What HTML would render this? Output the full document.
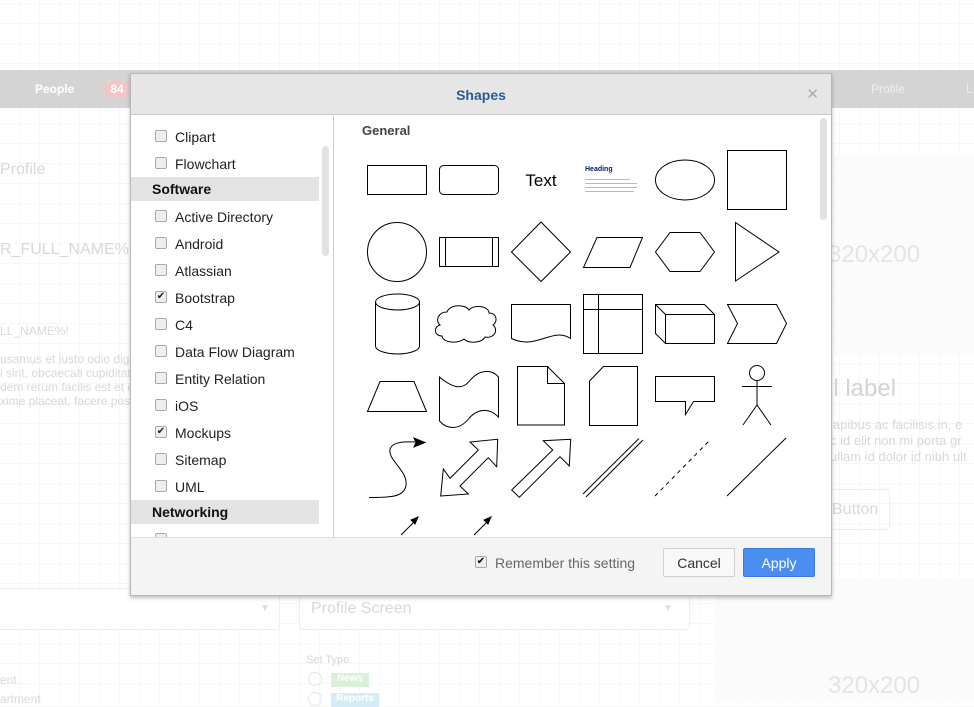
<!DOCTYPE html>
<html><head><meta charset="utf-8"><style>
*{margin:0;padding:0;box-sizing:border-box}
body{width:974px;height:703px;overflow:hidden;position:relative;font-family:"Liberation Sans",sans-serif;background:#fff;
background-image:repeating-linear-gradient(0deg,transparent 0 19px,#f7f7f7 19px 20px),repeating-linear-gradient(90deg,transparent 0 19px,#f7f7f7 19px 20px)}
.a{position:absolute;white-space:nowrap}
.f{color:#d8d8d8}
.dlg{position:absolute;left:130px;top:73px;width:702px;height:523px;background:#fff;border:1px solid #b8b8b8;box-shadow:0 2px 4px rgba(0,0,0,.25)}
.hd{position:absolute;left:0;top:0;width:700px;height:41px;background:#e6e6e6;border-bottom:1px solid #c8c8c8;text-align:center;font-weight:bold;font-size:14px;color:#2b5b94;line-height:42px}
.cl{position:absolute;right:12px;top:0;color:#aab;font-weight:normal;font-size:15px}
.lp{position:absolute;left:0;top:42px;width:203px;height:421px;border-right:1px solid #ccc;overflow:hidden}
.it{position:absolute;left:24px;font-size:14px;color:#222;white-space:nowrap;width:170px;height:16px}
.cb{position:absolute;left:0;top:1px;width:12px;height:12px;border:1px solid #aaa;border-radius:2px;background:#eee}
.it span{position:absolute;left:20px;top:0;white-space:nowrap}
.sh{position:absolute;left:0;width:188px;height:24px;background:#e3e3e3;font-weight:bold;font-size:14px;color:#111;line-height:24px;padding-left:21px}
.ft{position:absolute;left:0;top:463px;width:700px;height:58px;background:#f4f4f4;border-top:1px solid #ddd}
.btn{position:absolute;top:11px;height:29px;width:72px;font-size:14px;text-align:center;line-height:28px;border-radius:2px}
</style></head><body>
<div class="a" style="left:0;top:70px;width:974px;height:38px;background:#d4d4d4"></div>
<div class="a" style="left:35px;top:82px;color:#fff;font-weight:bold;font-size:12px">People</div>
<div class="a" style="left:104px;top:81px;width:26px;height:17px;border-radius:9px;background:#f6c4c4;color:#fff;font-weight:bold;font-size:12px;text-align:center;line-height:17px">84</div>
<div class="a" style="left:871px;top:82px;color:#eee;font-size:12px">Profile</div>
<div class="a" style="left:966px;top:82px;color:#eee;font-size:12px">L</div>
<div class="a f" style="left:0;top:161px;font-size:16px">Profile</div>
<div class="a f" style="left:0;top:241px;font-size:16px">R_FULL_NAME%</div>
<div class="a f" style="left:0;top:324px;font-size:12px">LL_NAME%!</div>
<div class="a f" style="left:0;top:352px;font-size:12px;line-height:14px">usamus et iusto odio dign<br>i sint, obcaecati cupiditat<br>dem rerum facilis est et e<br>xime placeat, facere poss</div>
<div class="a" style="left:833px;top:155px;width:141px;height:200px;background:#fbfbfb"></div>
<div class="a" style="left:828px;top:241px;font-size:24px;color:#e4e4e4">320x200</div>
<div class="a" style="left:828px;top:375px;font-size:24px;color:#d4d4d4">il label</div>
<div class="a f" style="left:830px;top:417px;font-size:13px;line-height:16px">lapibus ac facilisis in, e<br>c id elit non mi porta gr<br>ullam id dolor id nibh ult</div>
<div class="a" style="left:815px;top:489px;width:75px;height:41px;border:1px solid #eee;border-radius:4px"></div>
<div class="a f" style="left:832px;top:501px;font-size:16px">Button</div>
<div class="a" style="left:-5px;top:588px;width:285px;height:42px;border:1px solid #eee;border-radius:4px;background:#fff"></div>
<div class="a" style="left:260px;top:603px;color:#ddd;font-size:10px">▼</div>
<div class="a" style="left:299px;top:588px;width:391px;height:42px;border:1px solid #eee;border-radius:4px;background:#fff"></div>
<div class="a f" style="left:311px;top:600px;font-size:16px">Profile Screen</div>
<div class="a" style="left:663px;top:603px;color:#ddd;font-size:10px">▼</div>
<div class="a f" style="left:306px;top:654px;font-size:11px">Set Type</div>
<div class="a" style="left:308px;top:672px;width:14px;height:14px;border:1px solid #e4e4e4;border-radius:50%"></div>
<div class="a" style="left:331px;top:673px;width:38px;height:14px;background:#d9f0d9;color:#fff;font-size:10px;font-weight:bold;text-align:center">News</div>
<div class="a" style="left:308px;top:692px;width:14px;height:14px;border:1px solid #e4e4e4;border-radius:50%"></div>
<div class="a" style="left:331px;top:693px;width:48px;height:14px;background:#d3ecf8;color:#fff;font-size:10px;font-weight:bold;text-align:center">Reports</div>
<div class="a f" style="left:0;top:673px;font-size:12px">ent</div>
<div class="a f" style="left:0;top:692px;font-size:12px">artment</div>
<div class="a" style="left:715px;top:578px;width:259px;height:125px;background:#fbfbfb"></div>
<div class="a" style="left:828px;top:672px;font-size:24px;color:#e4e4e4">320x200</div>

<div class="dlg">
<div class="hd">Shapes<span class="cl">✕</span></div>
<div class="lp">
<div class="it" style="top:13px"><div class="cb"></div><span>Clipart</span></div>
<div class="it" style="top:40px"><div class="cb"></div><span>Flowchart</span></div>
<div class="sh" style="top:61px">Software</div>
<div class="it" style="top:93px"><div class="cb"></div><span>Active Directory</span></div>
<div class="it" style="top:120px"><div class="cb"></div><span>Android</span></div>
<div class="it" style="top:147px"><div class="cb"></div><span>Atlassian</span></div>
<div class="it" style="top:174px"><div class="cb" style="font-size:10px;line-height:10px;text-align:center">✔</div><span>Bootstrap</span></div>
<div class="it" style="top:201px"><div class="cb"></div><span>C4</span></div>
<div class="it" style="top:228px"><div class="cb"></div><span>Data Flow Diagram</span></div>
<div class="it" style="top:255px"><div class="cb"></div><span>Entity Relation</span></div>
<div class="it" style="top:282px"><div class="cb"></div><span>iOS</span></div>
<div class="it" style="top:309px"><div class="cb" style="font-size:10px;line-height:10px;text-align:center">✔</div><span>Mockups</span></div>
<div class="it" style="top:336px"><div class="cb"></div><span>Sitemap</span></div>
<div class="it" style="top:363px"><div class="cb"></div><span>UML</span></div>
<div class="sh" style="top:384px">Networking</div>
<div class="it" style="top:416px"><div class="cb"></div></div>
<div class="a" style="left:191px;top:30px;width:7px;height:110px;background:#e2e2e2;border-radius:4px"></div>
</div>
<svg class="a" style="left:203px;top:42px" width="497" height="421" viewBox="334 116 497 421" fill="none" stroke="#000" stroke-width="1">
<text x="362" y="135" font-family="Liberation Sans" font-size="13" font-weight="bold" fill="#444" stroke="none">General</text>
<rect x="820" y="118" width="7" height="102" rx="3.5" fill="#e2e2e2" stroke="none"/>
<rect x="367.5" y="165.5" width="59" height="29"/>
<rect x="439.5" y="165.5" width="59" height="29" rx="4"/>
<text x="541" y="186" font-family="Liberation Sans" font-size="17" text-anchor="middle" fill="#000" stroke="none">Text</text>
<text x="585" y="171" font-family="Liberation Sans" font-size="7" font-weight="bold" fill="#001a66" stroke="none">Heading</text>
<g stroke="#bbb" stroke-width="1"><line x1="585" y1="179.5" x2="630" y2="179.5"/><line x1="585" y1="183.5" x2="637" y2="183.5"/><line x1="585" y1="187.5" x2="637" y2="187.5"/><line x1="585" y1="191.5" x2="634" y2="191.5"/></g>
<ellipse cx="685" cy="180" rx="29.5" ry="20"/>
<rect x="727.5" y="150.5" width="59" height="59"/>
<circle cx="397" cy="252" r="29.5"/>
<rect x="439.5" y="237.5" width="59" height="29"/><line x1="445.5" y1="237" x2="445.5" y2="267"/><line x1="492.5" y1="237" x2="492.5" y2="267"/>
<polygon points="541,222 570.5,252 541,281.5 511.5,252"/>
<polygon points="597,237.5 642.5,237.5 630,267.5 583.5,267.5"/>
<polygon points="670,232.5 700,232.5 714.5,252 700,271.5 670,271.5 655.5,252"/>
<polygon points="735.5,222.5 779,252 735.5,281"/>
<path d="M375.5 302 v44 a22 8 0 0 0 44 0 v-44 a22 8 0 0 0 -44 0 a22 8 0 0 0 44 0"/>
<path d="M447 312 c3-8 18-8 22-2 c5-6 20-4 20 3 c8 0 9 9 4 12 c6 5 1 14-8 12 c-3 6-16 7-21 2 c-6 5-21 4-22-3 c-8 0-9-9-2-11 c-5-4-2-13 7-13z"/>
<path d="M511.5 304.5 h59 v34 c-18-12-34 12-59 0 z"/>
<rect x="583.5" y="294.5" width="59" height="59"/><line x1="598.5" y1="294" x2="598.5" y2="354"/><line x1="583" y1="309.5" x2="643" y2="309.5"/>
<path d="M655.5 304.5 h49 l10 10 v29 h-49 l-10-10 z M655.5 304.5 l10 10 h49 M665.5 314.5 v29"/>
<polygon points="727.5,304.5 776.5,304.5 786.5,323.5 776.5,343.5 727.5,343.5 737.5,323.5"/>
<polygon points="367.5,411.5 426.5,411.5 414,381.5 380,381.5"/>
<path d="M439.5 377 c12 10 22 14 30 4 c10-12 22-12 29-4 v40 c-10-10-22-8-30 2 c-10 12-22 10-29 2 z"/>
<path d="M517.5 366.5 h30 l17 17 v41.5 h-47 z M547.5 366.5 v17 h17"/>
<path d="M603.5 366.5 h34 v59 h-48 v-44.5 z"/>
<path d="M655.5 376.5 h59 v25 h-21 l-8 13 v-13 h-30 z"/>
<circle cx="757" cy="373" r="7.5"/><path d="M757 380.5 v25 M742 386.5 h30 M757 405 l-14 20 M757 405 l14 20"/>
<path d="M369 497.5 c20 0 35 0 37-12 c2-15-18-25-16-36 c2-8 15-8 25-7.5"/>
<polygon points="425,442.5 414,438 416,442.5 414,447" fill="#000"/>
<polygon points="440.7,496 468.3,494 460,486 488.3,457.7 496.7,466.7 497.7,439.3 470,442 478.3,450 450,478.3 443.3,469"/>
<polygon points="511.7,490 519.3,497.3 560,456.7 569.3,466 570.7,439.3 543.3,440.7 552.7,450"/>
<line x1="583" y1="494" x2="639" y2="438.5"/><line x1="586" y1="497" x2="643" y2="440"/>
<line x1="655" y1="496" x2="711" y2="439" stroke-dasharray="4 4"/>
<line x1="727" y1="496" x2="786" y2="438"/>
<line x1="401" y1="535" x2="416" y2="520"/><polygon points="418,517 411,520 415,524" fill="#000"/>
<line x1="474" y1="535" x2="489" y2="520"/><polygon points="491,517 484,520 488,524" fill="#000"/>
</svg>
<div class="ft">
<div class="a" style="left:344px;top:18px;width:12px;height:12px;border:1px solid #aaa;border-radius:2px;background:#eee;font-size:10px;line-height:10px;text-align:center">✔</div>
<div class="a" style="left:364px;top:17px;font-size:14px;color:#666">Remember this setting</div>
<div class="btn a" style="left:532px;top:10px;border:1px solid #d0d0d0;background:#f8f8f8;color:#333">Cancel</div>
<div class="btn a" style="left:612px;top:10px;background:#4a8ef2;border:1px solid #3a7de0;color:#fff">Apply</div>
</div>
</div>
</body></html>
